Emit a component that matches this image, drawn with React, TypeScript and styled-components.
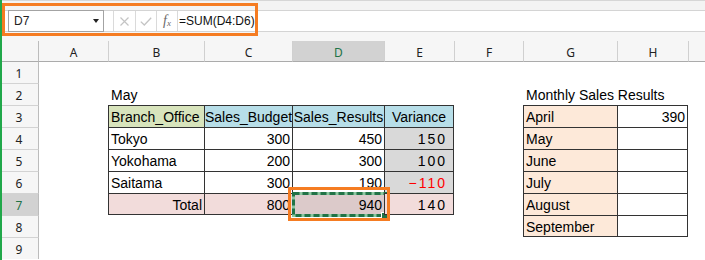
import { Fragment } from "react";
import styled, { createGlobalStyle, css } from "styled-components";

const GlobalStyle = createGlobalStyle`
  html, body {
    margin: 0;
    padding: 0;
    background: #fff;
  }
  body {
    font-family: "Liberation Sans", Arial, sans-serif;
  }
`;

const LINE = "#333";
const OLIVE = "#d8e4bc";
const BLUE = "#b7dee8";
const GRAY = "#d9d9d9";
const PINK = "#f2dcdb";
const PEACH = "#fde9d9";
const EXCEL_GREEN = "#217346";
const CALLOUT = "#f57c22";

type Align = "left" | "center" | "right";

type CellDef = {
  text?: string;
  align?: Align;
  bg?: string;
  color?: string;
  box?: boolean;
  right?: boolean;
  bottom?: boolean;
  wide?: boolean;
  selected?: boolean;
};

const COLUMNS = ["A", "B", "C", "D", "E", "F", "G", "H", "I"];
const ROWS = [1, 2, 3, 4, 5, 6, 7, 8, 9];

const branches: [string, number, number][] = [
  ["Tokyo", 300, 450],
  ["Yokohama", 200, 300],
  ["Saitama", 300, 190],
];
const months = ["April", "May", "June", "July", "August", "September"];
const monthValues: Record<string, number> = { April: 390 };

const fmt = (n: number) => (n < 0 ? `\u2212${Math.abs(n)}` : String(n));

// build the sheet contents row by row
const sheet: Record<number, Partial<Record<string, CellDef>>> = {
  2: { B: { text: "May" }, G: { text: "Monthly Sales Results" } },
  3: {
    B: { text: "Branch_Office", bg: OLIVE, box: true },
    C: { text: "Sales_Budget", bg: BLUE, box: true, align: "center" },
    D: { text: "Sales_Results", bg: BLUE, box: true, align: "center" },
    E: { text: "Variance", bg: BLUE, box: true, align: "center", right: true },
  },
};

branches.forEach(([name, budget, result], i) => {
  const diff = result - budget;
  sheet[4 + i] = {
    B: { text: name, box: true },
    C: { text: String(budget), box: true, align: "right" },
    D: { text: String(result), box: true, align: "right" },
    E: {
      text: fmt(diff),
      box: true,
      align: "right",
      right: true,
      wide: true,
      bg: GRAY,
      color: diff < 0 ? "#ff0000" : undefined,
    },
  };
});

const totalBudget = branches.reduce((s, b) => s + b[1], 0);
const totalResult = branches.reduce((s, b) => s + b[2], 0);
sheet[7] = {
  B: { text: "Total", box: true, bottom: true, align: "right", bg: PINK },
  C: { text: String(totalBudget), box: true, bottom: true, align: "right", bg: PINK },
  D: {
    text: String(totalResult),
    box: true,
    bottom: true,
    align: "right",
    bg: "#dccaca",
    selected: true,
  },
  E: {
    text: fmt(totalResult - totalBudget),
    box: true,
    bottom: true,
    right: true,
    wide: true,
    align: "right",
    bg: PINK,
  },
};

months.forEach((m, i) => {
  const row = 3 + i;
  const last = i === months.length - 1;
  const v = monthValues[m];
  sheet[row] = {
    ...(sheet[row] ?? {}),
    G: { text: m, box: true, bg: PEACH, bottom: last },
    H: {
      text: v !== undefined ? String(v) : undefined,
      box: true,
      right: true,
      bottom: last,
      align: "right",
    },
  };
});

const Page = styled.div`
  position: relative;
  width: 705px;
  height: 260px;
  box-sizing: border-box;
  border-left: 2px solid #21a84a;
  overflow: hidden;
  background: #fff;
`;

const TopStrip = styled.div`
  height: 10px;
  box-sizing: border-box;
  border-top: 1px solid #d6d6d6;
  background: #f3f3f3;
`;

const FormulaBar = styled.div`
  display: flex;
  height: 22px;
  box-sizing: border-box;
  padding-left: 6px;
  border-top: 1px solid #d4d4d4;
  border-bottom: 1px solid #d4d4d4;
  background: #fff;
`;

const NameBox = styled.div`
  width: 96px;
  margin: -1px 0;
  box-sizing: border-box;
  border: 1px solid #a3a3a3;
  display: flex;
  align-items: center;
  justify-content: space-between;
  padding: 0 4px 0 5px;
  font-size: 12px;
  color: #222;
  background: #fff;
`;

const ButtonGroup = styled.div`
  display: flex;
  margin-left: 9px;
`;

const BarButton = styled.div<{ $w: number; $last?: boolean }>`
  width: ${(p) => p.$w}px;
  box-sizing: border-box;
  border-left: 1px solid #dadada;
  ${(p) => p.$last && "border-right: 1px solid #dadada;"}
  display: flex;
  align-items: center;
  justify-content: center;
`;

const Fx = styled.span`
  font-family: "Liberation Serif", "Times New Roman", serif;
  font-style: italic;
  font-size: 14px;
  color: #6a6a6a;
  line-height: 1;

  sub {
    font-size: 9px;
    vertical-align: -1px;
  }
`;

const FormulaText = styled.div`
  display: flex;
  align-items: center;
  padding-left: 1px;
  font-size: 12px;
  color: #111;
`;

const HeaderGap = styled.div`
  height: 9px;
  background: #f6f6f6;
`;

const Sheet = styled.div`
  display: grid;
  grid-template-columns: 37px 69px 96px 88px 92px 70px 69px 94px 71px 1fr;
  grid-template-rows: 21px 21px repeat(8, 22px);
`;

const Corner = styled.div`
  background: #f6f6f6;
  border-right: 1px solid #bcbcbc;
  border-bottom: 1px solid #ababab;
`;

const ColHead = styled.div<{ $active?: boolean; $first?: boolean }>`
  box-sizing: border-box;
  display: flex;
  align-items: center;
  justify-content: center;
  padding-top: 3px;
  border-bottom: 1px solid #ababab;
  border-left: ${(p) => (p.$first ? "none" : "1px solid #d0d0d0")};
  background: ${(p) => (p.$active ? "#d2d2d2" : "#f6f6f6")};
  color: ${(p) => (p.$active ? EXCEL_GREEN : "#222")};
  font-family: "Noto Sans", "Open Sans", sans-serif;
  font-size: 12px;
`;

const RowHead = styled.div<{ $active?: boolean; $first?: boolean }>`
  box-sizing: border-box;
  display: flex;
  align-items: center;
  justify-content: center;
  padding: 2px 2px 0 0;
  border-right: 1px solid #bcbcbc;
  border-top: ${(p) => (p.$first ? "none" : "1px solid #d3d3d3")};
  background: ${(p) => (p.$active ? "#d2d2d2" : "#f6f6f6")};
  color: ${(p) => (p.$active ? EXCEL_GREEN : "#222")};
  font-family: "Noto Sans", "Open Sans", sans-serif;
  font-size: 12px;
`;

const justify = (a?: Align) =>
  a === "right" ? "flex-end" : a === "center" ? "center" : "flex-start";

const Cell = styled.div<{
  $align?: Align;
  $bg?: string;
  $color?: string;
  $box?: boolean;
  $right?: boolean;
  $bottom?: boolean;
  $wide?: boolean;
}>`
  position: relative;
  box-sizing: border-box;
  display: flex;
  align-items: center;
  justify-content: ${(p) => justify(p.$align)};
  padding: 1px ${(p) => (p.$wide ? "6px" : "2px")} 0 2px;
  border-left: 1px solid ${(p) => (p.$box ? LINE : "transparent")};
  border-top: 1px solid ${(p) => (p.$box ? LINE : "transparent")};
  ${(p) => p.$right && css`border-right: 1px solid ${LINE};`}
  ${(p) => p.$bottom && css`border-bottom: 1px solid ${LINE};`}
  background: ${(p) => p.$bg ?? "transparent"};
  color: ${(p) => p.$color ?? "#000"};
  font-size: 14px;
  letter-spacing: ${(p) => (p.$wide ? "2px" : "0")};
  white-space: nowrap;
`;

const Marquee = styled.svg`
  position: absolute;
  left: -1px;
  top: -2px;
  overflow: visible;
`;

const FillHandle = styled.div`
  position: absolute;
  left: 88px;
  top: 18px;
  width: 6px;
  height: 6px;
  box-sizing: border-box;
  background: ${EXCEL_GREEN};
  border-top: 1px solid #fff;
  border-left: 1px solid #fff;
`;

const Callout = styled.div<{ $x: number; $y: number; $w: number; $h: number }>`
  position: absolute;
  left: ${(p) => p.$x}px;
  top: ${(p) => p.$y}px;
  width: ${(p) => p.$w}px;
  height: ${(p) => p.$h}px;
  box-sizing: border-box;
  border: 3px solid ${CALLOUT};
  pointer-events: none;
`;

function Selection() {
  return (
    <>
      <Marquee width="95" height="25" viewBox="0 0 95 25">
        <rect x="1.5" y="1.5" width="92" height="22" fill="none" stroke="#8cc7a0" strokeWidth="3" />
        <rect
          x="1.5"
          y="1.5"
          width="92"
          height="22"
          fill="none"
          stroke={EXCEL_GREEN}
          strokeWidth="3"
          strokeDasharray="6 3"
        />
      </Marquee>
      <FillHandle />
    </>
  );
}

export default function App() {
  return (
    <>
      <GlobalStyle />
      <Page>
        <TopStrip />
        <FormulaBar>
          <NameBox>
            <span>D7</span>
            <svg width="6" height="4" viewBox="0 0 6 4">
              <path d="M0 0 H6 L3 4 Z" fill="#222" />
            </svg>
          </NameBox>
          <ButtonGroup>
            <BarButton $w={22}>
              <svg width="9" height="9" viewBox="0 0 9 9">
                <path d="M0.5 0.5 L8.5 8.5 M8.5 0.5 L0.5 8.5" stroke="#c4c4c4" strokeWidth="1.2" />
              </svg>
            </BarButton>
            <BarButton $w={21}>
              <svg width="12" height="9" viewBox="0 0 12 9">
                <path d="M0.8 4.6 L4.3 8 L11.2 0.8" stroke="#c4c4c4" strokeWidth="1.3" fill="none" />
              </svg>
            </BarButton>
            <BarButton $w={22} $last>
              <Fx>
                f<sub>x</sub>
              </Fx>
            </BarButton>
          </ButtonGroup>
          <FormulaText>=SUM(D4:D6)</FormulaText>
        </FormulaBar>
        <HeaderGap />
        <Sheet>
          <Corner />
          {COLUMNS.map((c, i) => (
            <ColHead key={c} $first={i === 0} $active={c === "D"}>
              {c === "I" ? "" : c}
            </ColHead>
          ))}
          {ROWS.map((r) => (
            <Fragment key={r}>
              <RowHead $first={r === 1} $active={r === 7}>
                {r}
              </RowHead>
              {COLUMNS.map((c) => {
                const d = sheet[r]?.[c] ?? {};
                return (
                  <Cell
                    key={c}
                    $align={d.align}
                    $bg={d.bg}
                    $color={d.color}
                    $box={d.box}
                    $right={d.right}
                    $bottom={d.bottom}
                    $wide={d.wide}
                  >
                    {d.text}
                    {d.selected && <Selection />}
                  </Cell>
                );
              })}
            </Fragment>
          ))}
        </Sheet>
        <Callout $x={0} $y={3} $w={256} $h={33} />
        <Callout $x={286} $y={187} $w={102} $h={34} />
      </Page>
    </>
  );
}
